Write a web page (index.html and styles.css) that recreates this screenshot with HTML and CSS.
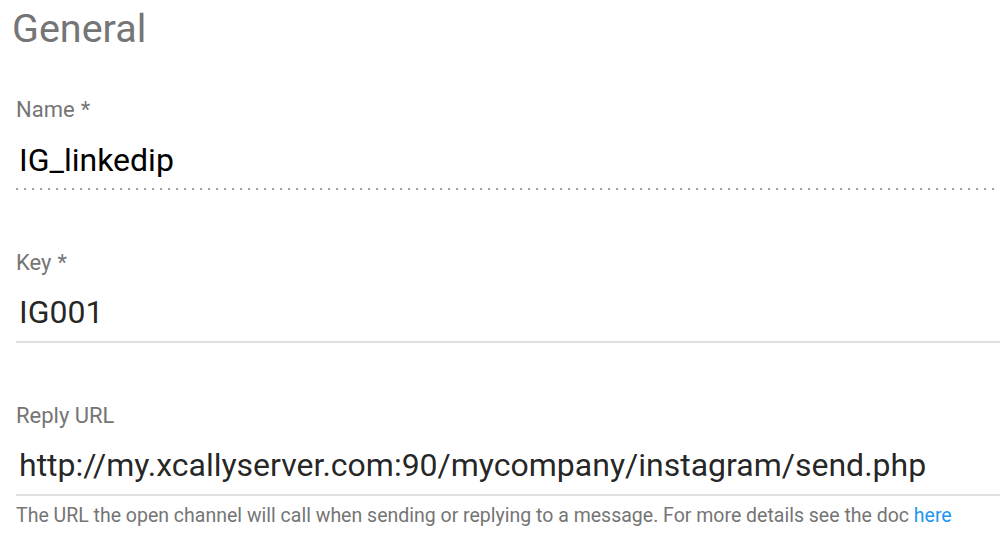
FILE: index.html
```html
<!DOCTYPE html>
<html lang="en">
<head>
  <meta charset="UTF-8">
  <title>General</title>
  <link rel="stylesheet" href="styles.css">
</head>
<body>
  <div class="page">
    <h2 class="title">General</h2>

    <div class="field">
      <label for="name">Name<span class="req">*</span></label>
      <input type="text" id="name" class="disabled" value="IG_linkedip" readonly>
    </div>

    <div class="field">
      <label for="key">Key<span class="req">*</span></label>
      <input type="text" id="key" value="IG001" readonly>
    </div>

    <div class="field">
      <label for="url">Reply URL</label>
      <input type="text" id="url" value="http://my.xcallyserver.com:90/mycompany/instagram/send.php" readonly>
      <div class="hint">The URL the open channel will call when sending or replying to a message. For more details see the doc <a href="#">here</a></div>
    </div>
  </div>
</body>
</html>
```

FILE: styles.css
```css
body {
  margin: 0;
  font-family: Roboto, "Liberation Sans", sans-serif;
  background: #ffffff;
  color: rgba(0, 0, 0, 0.87);
}

.page {
  padding: 5px 0 0 16px;
}

.title {
  margin: 0 0 0 -4px;
  font-size: 39.5px;
  line-height: 48px;
  font-weight: 400;
  color: #757575;
}

.field {
  margin-top: 44px;
}

.field + .field {
  margin-top: 60px;
}

label {
  display: block;
  font-size: 22px;
  line-height: 26px;
  color: #757575;
  margin-bottom: 17px;
}

.req {
  margin-left: 6px;
}

input {
  display: block;
  width: 100%;
  box-sizing: border-box;
  height: 50px;
  margin: 0;
  padding: 0 0 10px 3px;
  border: none;
  border-bottom: 2px solid #e0e0e0;
  outline: none;
  font-family: Roboto, "Liberation Sans", sans-serif;
  font-size: 32px;
  line-height: 38px;
  color: rgba(0, 0, 0, 0.87);
  background: transparent;
}

input.disabled {
  color: #000000;
  border-bottom: none;
  background-image: linear-gradient(to right, #9e9e9e 0, #9e9e9e 2px, transparent 2px);
  background-size: 8px 2px;
  background-repeat: repeat-x;
  background-position: 0 bottom;
}

.hint {
  margin-top: 8px;
  font-size: 19.5px;
  line-height: 24px;
  color: #757575;
}

.hint a {
  color: #2196f3;
  text-decoration: none;
}
```
